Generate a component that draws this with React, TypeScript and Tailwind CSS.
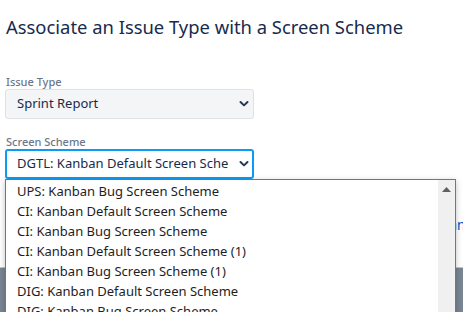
import React from "react";

const options = [
  "UPS: Kanban Bug Screen Scheme",
  "CI: Kanban Default Screen Scheme",
  "CI: Kanban Bug Screen Scheme",
  "CI: Kanban Default Screen Scheme (1)",
  "CI: Kanban Bug Screen Scheme (1)",
  "DIG: Kanban Default Screen Scheme",
  "DIG: Kanban Bug Screen Scheme",
];

function Chevron() {
  return (
    <svg width="10" height="8" viewBox="0 0 10 8" className="shrink-0">
      <path d="M1.5 2 L5 5.4 L8.5 2" fill="none" stroke="#253858" strokeWidth="2" strokeLinecap="round" strokeLinejoin="round" />
    </svg>
  );
}

export default function App() {
  return (
    <div
      className="relative h-[312px] w-full overflow-hidden bg-white"
      style={{ fontFamily: '"Noto Sans", "Open Sans", sans-serif' }}
    >
      {/* Page */}
      <div className="flex h-full flex-col">
        <div className="px-[6px] pt-[14px]">
          <h1 className="text-[18.4px] leading-[26px] font-normal text-[#172b4d]">
            Associate an Issue Type with a Screen Scheme
          </h1>
        </div>

        <form className="mt-[35px] flex w-[250px] flex-col px-[5px]">
          <label className="pl-px text-[11px] leading-[14px] font-medium text-[#6b778c]">Issue Type</label>
          <div className="flex h-[30px] w-[249px] items-center justify-between rounded-[3px] border border-[#dfe1e6] bg-[#f4f5f7] pl-[11px] pr-[4px]">
            <span className="text-[13px] text-[#172b4d]">Sprint Report</span>
            <Chevron />
          </div>

          <label className="mt-[16px] pl-px text-[11px] leading-[14px] font-medium text-[#6b778c]">Screen Scheme</label>
          <div className="flex h-[30px] w-[249px] items-center justify-between rounded-[3px] border-2 border-[#0a9cf5] bg-white pl-[10px] pr-[3px]">
            <span className="w-[212px] overflow-hidden whitespace-nowrap text-[13px] text-[#172b4d]">
              DGTL: Kanban Default Screen Scheme
            </span>
            <Chevron />
          </div>
        </form>

        <div className="mt-[37px] flex pl-[441px]">
          <a className="whitespace-nowrap text-[13.5px] leading-[18px] text-[#0052cc]">Cancel</a>
        </div>

        <div className="mt-auto h-[45px] border-t border-[#c1c7d0] bg-[#7a8694]" />
      </div>

      {/* Open dropdown list */}
      <div className="absolute left-[5px] top-[179px] flex h-[150px] w-[451px] border border-[#767676] bg-white shadow-[0_2px_6px_rgba(0,0,0,0.25)]">
        <ul className="flex-1 pt-[1px]">
          {options.map((o) => (
            <li
              key={o}
              className="h-[20px] whitespace-nowrap pl-[11px] text-[13px] leading-[20px] text-[#1e1e1e]"
            >
              {o}
            </li>
          ))}
        </ul>
        <div className="flex w-[17px] justify-center bg-[#f0f0f0] pt-[7px]">
          <svg width="9" height="5" viewBox="0 0 9 5">
            <path d="M0 5 L4.5 0 L9 5 Z" fill="#606060" />
          </svg>
        </div>
      </div>
    </div>
  );
}
